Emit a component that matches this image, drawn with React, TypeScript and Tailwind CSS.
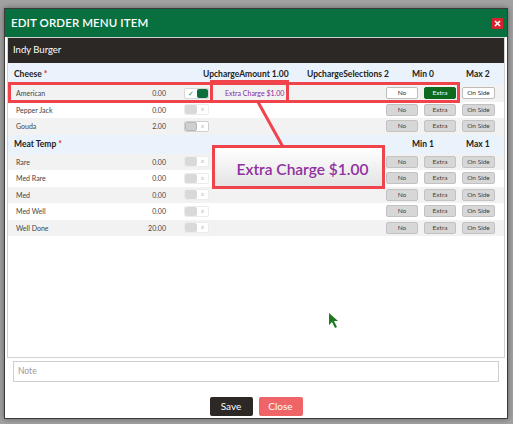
import React from "react";

type Opt = { name: string; price: string; on?: boolean; faded?: boolean };

const cheese: Opt[] = [
  { name: "American", price: "0.00", on: true },
  { name: "Pepper Jack", price: "0.00", faded: true },
  { name: "Gouda", price: "2.00" },
];

const temps: Opt[] = [
  { name: "Rare", price: "0.00", faded: true },
  { name: "Med Rare", price: "0.00", faded: true },
  { name: "Med", price: "0.00", faded: true },
  { name: "Med Well", price: "0.00", faded: true },
  { name: "Well Done", price: "20.00", faded: true },
];

const Toggle = ({ on, faded }: { on?: boolean; faded?: boolean }) =>
  on ? (
    <div className="flex w-[25px] h-[11px] rounded-[2px] border border-[#d8d8d8] bg-white">
      <span className="w-[12px] flex items-center justify-center text-[7px] leading-none text-[#2e8b57]">
        ✓
      </span>
      <span className="flex-1 bg-[#0b6e3c] rounded-[2px]" />
    </div>
  ) : (
    <div
      className={`flex w-[25px] h-[11px] rounded-[2px] border bg-white ${faded ? "border-[#ececec]" : "border-[#d0d0d0]"}`}
    >
      <span
        className={`w-[12px] rounded-[2px] ${faded ? "bg-[#d9d9d9]" : "bg-[#cfcfcf] border border-[#b8b8b8]"}`}
      />
      <span className="flex-1 flex items-center justify-center text-[7px] leading-none text-[#bbb]">
        ×
      </span>
    </div>
  );

const Btn = ({
  label,
  kind,
  w = "w-[32px]",
}: {
  label: string;
  kind: "gray" | "white" | "green";
  w?: string;
}) => {
  const cls =
    kind === "green"
      ? "bg-[#0e6a1c] border-[#0e6a1c] text-white"
      : kind === "white"
        ? "bg-white border-[#bdbdbd] text-[#333]"
        : "bg-[#d7d7d7] border-[#c2c2c2] text-[#444]";
  return (
    <div
      className={`${w} h-[12px] flex items-center justify-center rounded-[2px] border text-[6.5px] leading-none ${cls}`}
    >
      {label}
    </div>
  );
};

const Row = ({ opt, shaded }: { opt: Opt; shaded: boolean }) => (
  <div
    className={`flex items-center h-[16.5px] pl-[8px] pr-[9px] text-[7px] text-[#444] ${shaded ? "bg-[#f2f2f2]" : "bg-white"}`}
  >
    <div className="w-[110px]">{opt.name}</div>
    <div className="w-[40px] text-right">{opt.price}</div>
    <div className="ml-[18px]">
      <Toggle on={opt.on} faded={opt.faded} />
    </div>
    <div className="ml-[16px] text-[#8a2a9c]">{opt.on ? "Extra Charge $1.00" : ""}</div>
    <div className="ml-auto flex gap-[6px]">
      <Btn label="No" kind={opt.on ? "white" : "gray"} />
      <Btn label="Extra" kind={opt.on ? "green" : "gray"} />
      <Btn label="On Side" kind={opt.on ? "white" : "gray"} w="w-[33px]" />
    </div>
  </div>
);

const GroupHeader = ({
  title,
  amount,
  selections,
  min,
  max,
  h,
}: {
  title: string;
  amount?: string;
  selections?: string;
  min: string;
  max: string;
  h: string;
}) => (
  <div className={`flex items-center ${h} bg-[#eaf3fb] pl-[6px] text-[8.5px] font-bold text-[#222]`}>
    <div className="w-[189px]">
      {title} <span className="text-[#e3262d]">*</span>
    </div>
    <div className="w-[104px]">{amount}</div>
    <div className="w-[105px]">{selections}</div>
    <div className="w-[54px]">{min}</div>
    <div>{max}</div>
  </div>
);

export default function App() {
  return (
    <div className="relative w-[513px] h-[424px] overflow-hidden bg-[#a2a2a2] pt-[8px] pl-[4px] font-['Lato','Liberation_Sans',sans-serif]">
      <div className="w-[504px] h-[411px] flex flex-col bg-white border border-[#3b3b3b] shadow-[0_0_6px_rgba(0,0,0,0.4)]">
        <div className="h-[28px] shrink-0 flex items-center justify-between bg-[#08703f] pl-[6px] pr-[4px]">
          <span className="text-white text-[11.5px] font-semibold tracking-[0.1px]">EDIT ORDER MENU ITEM</span>
          <span className="w-[11px] h-[11px] bg-[#d8222f] rounded-[1px] flex items-center justify-center">
            <svg width="7" height="7" viewBox="0 0 7 7">
              <path d="M1 1L6 6M6 1L1 6" stroke="white" strokeWidth="1.6" />
            </svg>
          </span>
        </div>

        <div className="flex-1 flex flex-col px-[2px]">
          <div className="h-[321px] shrink-0 border border-[#d2d2d2] flex flex-col">
            <div className="h-[25px] shrink-0 bg-[#2c2826] flex items-center pl-[5px] text-white text-[9.5px]">
              Indy Burger
            </div>
            <GroupHeader
              title="Cheese"
              amount="UpchargeAmount 1.00"
              selections="UpchargeSelections 2"
              min="Min 0"
              max="Max 2"
              h="h-[22px]"
            />
            {cheese.map((o, i) => (
              <Row key={o.name} opt={o} shaded={i % 2 === 0} />
            ))}
            <GroupHeader title="Meat Temp" min="Min 1" max="Max 1" h="h-[19px]" />
            {temps.map((o, i) => (
              <Row key={o.name} opt={o} shaded={i % 2 === 0} />
            ))}
          </div>

          <div className="mt-[3px] mx-[6px] h-[21px] border border-[#cfcfcf] flex items-center pl-[4px] text-[8.5px] text-[#9a9a9a]">
            Note
          </div>

          <div className="mt-[15px] flex justify-center gap-[6px]">
            <button className="w-[43px] h-[19px] rounded-[2px] bg-[#2b2826] text-white text-[10px]">Save</button>
            <button className="w-[44px] h-[19px] rounded-[2px] bg-[#ef6467] text-white text-[10px]">Close</button>
          </div>
        </div>
      </div>

      {/* annotation overlays */}
      <div className="absolute left-[8px] top-[82px] w-[452px] h-[21px] border-[3px] border-[#f0444c]" />
      <div className="absolute left-[210px] top-[80px] w-[79px] h-[23px] border-[3px] border-[#f0444c]" />
      <svg className="absolute left-0 top-0" width="513" height="424">
        <path d="M258 102 L283 147" stroke="#f0444c" strokeWidth="3" />
        <path d="M329 313 L329 325 L332 322 L335 328 L337 327 L334 321 L338 321 Z" fill="#1f7a1f" />
      </svg>
      <div className="absolute left-[212px] top-[145px] w-[173px] h-[44px] border-[3px] border-[#f0444c] bg-gradient-to-b from-white to-[#e4e4e4] flex items-center justify-center pt-[5px]">
        <span className="text-[15.5px] font-semibold text-[#92309f] pl-[8px]">Extra Charge $1.00</span>
      </div>
    </div>
  );
}
